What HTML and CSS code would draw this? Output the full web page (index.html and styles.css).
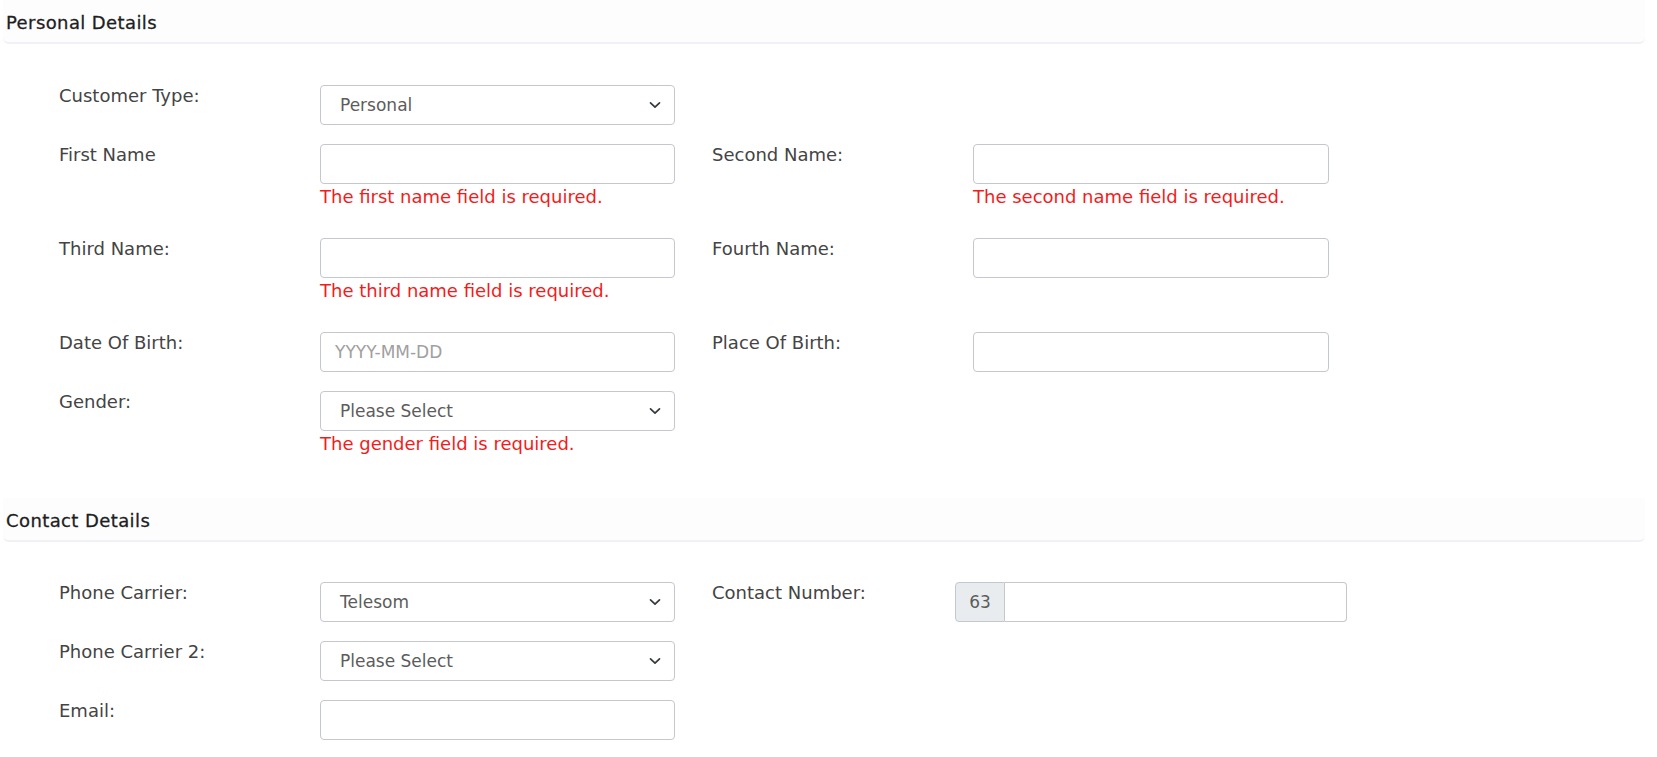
FILE: index.html
```html
<!DOCTYPE html>
<html>
<head>
<meta charset="utf-8">
<title>Customer Form</title>
<link rel="stylesheet" href="styles.css">
</head>
<body>
<div class="page">
  <div class="section-head">Personal Details</div>
  <div class="form">
    <div class="row">
      <div class="half">
        <div class="label">Customer Type:</div>
        <div class="field">
          <div class="select"><span class="value">Personal</span><svg class="chev" width="12" height="8" viewBox="0 0 12 8"><path d="M1.5 1.8 L6 6.2 L10.5 1.8" fill="none" stroke="#343a40" stroke-width="1.7" stroke-linecap="round" stroke-linejoin="round"/></svg></div>
        </div>
      </div>
    </div>
    <div class="row">
      <div class="half">
        <div class="label">First Name</div>
        <div class="field">
          <div class="input"></div>
          <div class="error">The first name field is required.</div>
        </div>
      </div>
      <div class="half second">
        <div class="label">Second Name:</div>
        <div class="field">
          <div class="input"></div>
          <div class="error">The second name field is required.</div>
        </div>
      </div>
    </div>
    <div class="row">
      <div class="half">
        <div class="label">Third Name:</div>
        <div class="field">
          <div class="input"></div>
          <div class="error">The third name field is required.</div>
        </div>
      </div>
      <div class="half second">
        <div class="label">Fourth Name:</div>
        <div class="field">
          <div class="input"></div>
        </div>
      </div>
    </div>
    <div class="row">
      <div class="half">
        <div class="label">Date Of Birth:</div>
        <div class="field">
          <div class="input"><span class="placeholder">YYYY-MM-DD</span></div>
        </div>
      </div>
      <div class="half second">
        <div class="label">Place Of Birth:</div>
        <div class="field">
          <div class="input"></div>
        </div>
      </div>
    </div>
    <div class="row">
      <div class="half">
        <div class="label">Gender:</div>
        <div class="field">
          <div class="select"><span class="value">Please Select</span><svg class="chev" width="12" height="8" viewBox="0 0 12 8"><path d="M1.5 1.8 L6 6.2 L10.5 1.8" fill="none" stroke="#343a40" stroke-width="1.7" stroke-linecap="round" stroke-linejoin="round"/></svg></div>
          <div class="error">The gender field is required.</div>
        </div>
      </div>
    </div>
  </div>

  <div class="section-head">Contact Details</div>
  <div class="form contact-form">
    <div class="row">
      <div class="half">
        <div class="label">Phone Carrier:</div>
        <div class="field">
          <div class="select"><span class="value">Telesom</span><svg class="chev" width="12" height="8" viewBox="0 0 12 8"><path d="M1.5 1.8 L6 6.2 L10.5 1.8" fill="none" stroke="#343a40" stroke-width="1.7" stroke-linecap="round" stroke-linejoin="round"/></svg></div>
        </div>
      </div>
      <div class="half second contact">
        <div class="label">Contact Number:</div>
        <div class="field">
          <div class="group"><span class="addon">63</span><div class="input grp-input"></div></div>
        </div>
      </div>
    </div>
    <div class="row">
      <div class="half">
        <div class="label">Phone Carrier 2:</div>
        <div class="field">
          <div class="select"><span class="value">Please Select</span><svg class="chev" width="12" height="8" viewBox="0 0 12 8"><path d="M1.5 1.8 L6 6.2 L10.5 1.8" fill="none" stroke="#343a40" stroke-width="1.7" stroke-linecap="round" stroke-linejoin="round"/></svg></div>
        </div>
      </div>
    </div>
    <div class="row">
      <div class="half">
        <div class="label">Email:</div>
        <div class="field">
          <div class="input"></div>
        </div>
      </div>
    </div>
  </div>
</div>
</body>
</html>
```
FILE: styles.css
```css
* { box-sizing: border-box; }
html, body { margin: 0; padding: 0; background: #ffffff; }
body {
  font-family: "DejaVu Sans", "Open Sans", sans-serif;
  color: #444444;
  font-size: 18px;
}
.page {
  width: 1657px;
  padding: 0 12px 0 3px;
}
.section-head {
  height: 44px;
  padding: 12px 0 0 3px;
  font-size: 18px;
  line-height: 22px;
  letter-spacing: 0.4px;
  color: #1e1e1e;
  -webkit-text-stroke: 0.3px #1e1e1e;
  background: #fdfdfe;
  border-bottom: 2px solid #f0f1f6;
  border-radius: 0 0 6px 6px;
}
.form {
  padding: 41px 0 13px 56px;
}
.form.contact-form {
  padding-top: 40px;
}
.row {
  display: flex;
  margin-bottom: 19px;
}
.half {
  display: flex;
  flex: none;
}
.label {
  width: 261px;
  flex: none;
  font-size: 18px;
  line-height: 22px;
  color: #444444;
}
.field {
  width: 355px;
  flex: none;
  margin-right: 37px;
}
.half.second .label { width: 261px; }
.half.second .field { width: 356px; }
.half.second.contact .label { width: 243px; }
.half.second.contact .field { width: 392px; }
.input, .select {
  height: 40px;
  border: 1px solid #c4c7d0;
  border-radius: 4px;
  background: #fff;
  display: flex;
  align-items: center;
  padding: 0 14px 0 19px;
  font-size: 17px;
  color: #5c5c5c;
}
.input { padding-left: 14px; }
.select { justify-content: space-between; }
.chev { flex: none; margin-right: -1px; }
.placeholder { color: #a0a0a0; }
.error {
  color: #f21c1c;
  font-size: 18px;
  line-height: 22px;
  margin-top: 2px;
  height: 33px;
}
.group {
  display: flex;
  height: 40px;
}
.addon {
  width: 50px;
  flex: none;
  display: flex;
  align-items: center;
  justify-content: center;
  background: #e9ecef;
  border: 1px solid #c4c7d0;
  border-radius: 4px 0 0 4px;
  color: #5c5c5c;
  font-size: 17px;
}
.grp-input {
  flex: 1;
  border-left: 0;
  border-radius: 0 4px 4px 0;
}
```
